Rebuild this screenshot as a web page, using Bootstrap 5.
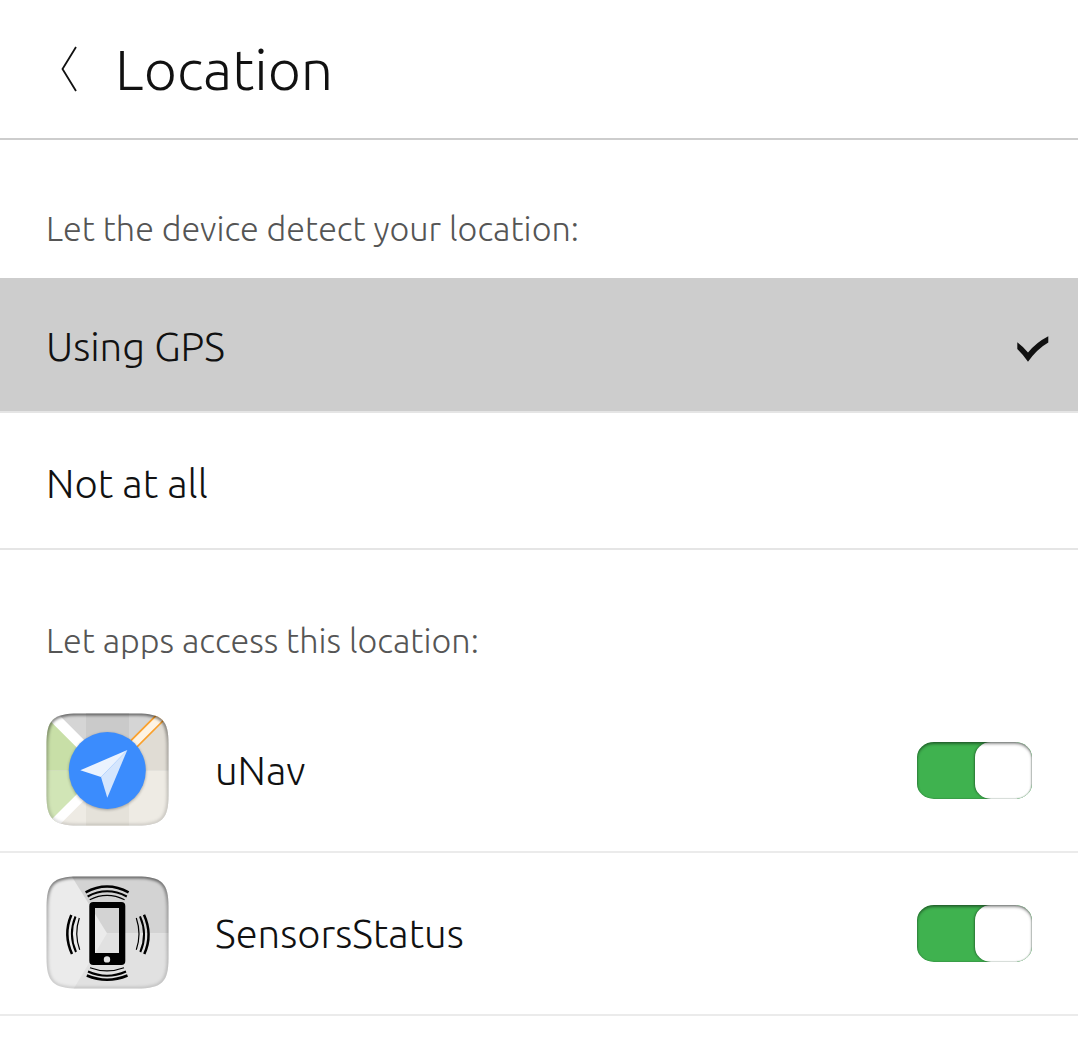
<!DOCTYPE html>
<html lang="en">
<head>
<meta charset="utf-8">
<meta name="viewport" content="width=device-width, initial-scale=1">
<title>Location</title>
<link href="https://cdn.jsdelivr.net/npm/bootstrap@5.3.0/dist/css/bootstrap.min.css" rel="stylesheet">
<script src="https://cdn.jsdelivr.net/npm/bootstrap@5.3.0/dist/js/bootstrap.bundle.min.js" defer></script>
<style>
body{font-family:Ubuntu,"Open Sans","Noto Sans",sans-serif;font-weight:300;color:#111;background:#fff;overflow:hidden}
.screen{width:1078px}
.page-head{height:140px;border-bottom:2px solid #cdcdcd;padding-left:60px}
.page-title{font-size:57.2px;font-weight:300;line-height:1;margin:2px 0 0 37px;white-space:nowrap}
.section-label{height:138px;font-size:34.15px;line-height:36px;font-weight:300;color:#555;margin:0;padding:70px 46px 0;white-space:nowrap}
.label-apps{padding-top:72px}
.list-group-flush>.list-group-item,.list-group-flush>.list-group-item:last-child{border-width:0 0 2px}
.opt{font-size:40.1px;line-height:1;padding:5px 29px 0 46px;border-color:#e5e5e5;color:#111;background:#fff}
.opt.opt-on{height:135px;background:#cdcdcd;background-clip:padding-box}
.opt.opt-off{height:137px;padding-top:8px}
.opt-on svg{margin-top:4px}
.app-row{height:163px;padding:0 46px 2px;font-size:40px;line-height:1;border-color:#ebebeb;color:#111;background:#fff}
.app-row:first-child{height:165px;padding-bottom:0}
.app-name{margin:3px 0 0 46px}
.toggle-track{width:115px;height:57px;margin-top:2px;border-radius:17px/15px;background:#3fb24f;overflow:hidden;position:relative;border:0;padding:0}
.toggle-thumb{width:57px;height:57px;border-radius:16px/15px;background:#fff;box-shadow:-1px 0 2px rgba(0,0,0,.35)}
.toggle-track::after{content:"";position:absolute;inset:0;border-radius:inherit;box-shadow:inset 0 2px 3px rgba(0,0,0,.42),inset 0 0 1px 1px rgba(40,80,50,.18)}
</style>
</head>
<body>
<svg width="0" height="0" class="position-absolute" aria-hidden="true">
<defs>
<path id="tile" d="M0.5 31C0.5 7 7 .5 32 .5H91C116 .5 122.500 7 122.500 31V82C122.500 106 116 112.500 91 112.500H32C7 112.500 .5 106 .5 82Z"/>
<clipPath id="tileClip"><use href="#tile"/></clipPath>
<filter id="soft" x="-10%" y="-10%" width="120%" height="120%"><feGaussianBlur stdDeviation="1.500"/></filter>
<linearGradient id="rim" x1="0" y1="0" x2="0" y2="1"><stop offset="0" stop-color="#000" stop-opacity=".6"/><stop offset=".25" stop-color="#000" stop-opacity=".3"/><stop offset="1" stop-color="#000" stop-opacity=".14"/></linearGradient>
</defs>
</svg>
<main class="screen">
<header class="page-head d-flex align-items-center">
<svg width="18" height="46" viewBox="0 0 18 46"><path d="M16 1L2.500 23L16 45" fill="none" stroke="#111" stroke-width="1.800"/></svg>
<h1 class="page-title">Location</h1>
</header>
<section>
<h2 class="section-label">Let the device detect your location:</h2>
<div class="list-group list-group-flush">
<div class="list-group-item opt opt-on d-flex align-items-center justify-content-between">Using GPS
<svg width="32" height="27" viewBox="0 0 32 27"><path d="M.3 6.300Q6.500 11 11 16.500Q19 6.500 31.300 .2V6.500Q20 13 11 25.800Q6.500 19 .3 13Z" fill="#111"/></svg>
</div>
<div class="list-group-item opt opt-off d-flex align-items-center">Not at all</div>
</div>
</section>
<section>
<h2 class="section-label label-apps">Let apps access this location:</h2>
<div class="list-group list-group-flush">
<div class="list-group-item app-row d-flex align-items-center">
<svg width="123" height="113" viewBox="0 0 123 113">
<g clip-path="url(#tileClip)">
<path fill="#d5d5d5" d="M0 0H123V113H0Z"/><path fill="#cacaca" d="M40 0H83V58H40Z"/>
<path fill="#e0dcd4" d="M118.700 0H123V57.500H61.200Z"/>
<path fill="#eeebe4" d="M61 57.500H123V113H5Z"/>
<path fill="#e5e2da" d="M40 57.500H83V113H40Z"/>
<path fill="#c8dfa7" d="M0 -3.700L61.200 57.500H0Z"/><path fill="#d1e5b6" d="M0 57.500H61.200L0 118.700Z"/>
<path stroke="#fff" stroke-width="10.500" d="M-4 -7.700L61.200 57.500"/>
<path stroke="#fff" stroke-width="9.500" d="M-4 122.700L61.200 57.500"/>
<path stroke="#faa02c" stroke-width="10.500" d="M61.200 57.500L125 -6.300"/>
<path stroke="#fdf3e4" stroke-width="7" d="M61.200 57.500L125 -6.300"/>
<circle cx="61.300" cy="58.500" r="38.500" fill="#000" opacity=".3" filter="url(#soft)"/>
<circle cx="61.300" cy="57.500" r="38.500" fill="#3b8cfd"/>
<path fill="#d5e6fd" d="M81.300 37L61.300 84.700L55 64Z"/><path fill="#ebf3fe" d="M81.300 37L34.300 57.300L55 64Z"/>
<use href="#tile" fill="none" stroke="url(#rim)" stroke-width="3.500" filter="url(#soft)"/>
</g></svg>
<span class="app-name">uNav</span>
<div class="toggle-track ms-auto d-flex justify-content-end" role="switch" aria-checked="true" aria-label="uNav"><div class="toggle-thumb"></div></div>
</div>
<div class="list-group-item app-row d-flex align-items-center">
<svg width="123" height="113" viewBox="0 0 123 113">
<g clip-path="url(#tileClip)">
<path fill="#ebebeb" d="M0 0H123V113H0Z"/>
<path fill="#d3d3d3" d="M25.500 0H123V57.300H61Z"/><path fill="#e1e1e1" d="M61 57.300H123V113H27.500Z"/>
<path fill="#000" fill-rule="evenodd" d="M47.300 26H75.300Q79.300 26 79.300 30V85Q79.300 89 75.300 89H47.300Q43.300 89 43.300 85V30Q43.300 26 47.300 26ZM49 32V77H73V32ZM61 80.200A3.200 3.200 0 1 0 61 86.600A3.200 3.200 0 1 0 61 80.200Z"/>
<g fill="none" stroke="#000" stroke-width="2.500">
<path d="M39.600 16.300Q61 4.700 82.600 16.300M40.800 99.500Q61 108 81.500 99.500M25.300 39Q17 58.500 26 78M98 38.700Q107 58.500 98.300 78"/>
<path stroke-width="2" d="M41.600 20.500Q61 10.100 80.800 20.500M42 95.500Q61 104 80 95.500M29.500 40.500Q22 58.500 30 76M94 40.300Q102 58.500 94.300 76"/>
<path stroke-width="1.200" d="M43.700 23.700Q61 15 78.600 23.700M44 91.700Q61 98 78 91.700M33.300 42Q28 58 33.700 73.700M90.300 42Q95.700 58 90.300 73.700"/>
</g>
<use href="#tile" fill="none" stroke="url(#rim)" stroke-width="3.500" filter="url(#soft)"/>
</g></svg>
<span class="app-name">SensorsStatus</span>
<div class="toggle-track ms-auto d-flex justify-content-end" role="switch" aria-checked="true" aria-label="SensorsStatus"><div class="toggle-thumb"></div></div>
</div>
</div>
</section>
</main>
</body>
</html>
